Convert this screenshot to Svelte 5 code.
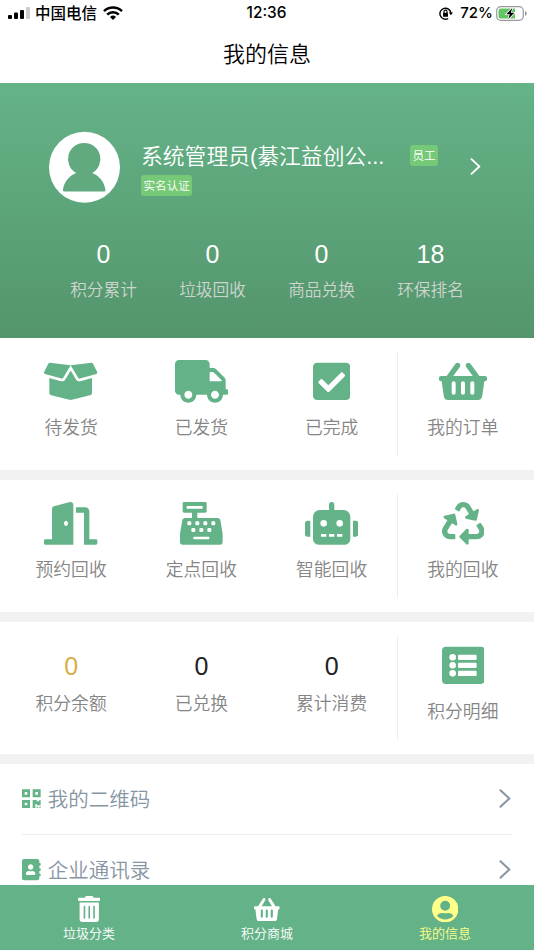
<script lang="ts">
  interface Icon {
    box: string;
    width: number;
    height: number;
    path: string;
  }

  interface Entry {
    label: string;
    icon: keyof typeof icons;
  }

  const basket =
    "M576 216v16c0 13.255-10.745 24-24 24h-8l-26.113 182.788C514.509 462.435 494.257 480 470.37 480H105.63c-23.887 0-44.139-17.565-47.518-41.212L32 256h-8c-13.255 0-24-10.745-24-24v-16c0-13.255 10.745-24 24-24h67.341l106.78-146.821c10.395-14.292 30.407-17.453 44.701-7.058 14.293 10.395 17.453 30.408 7.058 44.701L170.477 192h235.046L326.12 82.821c-10.395-14.292-7.234-34.306 7.059-44.701 14.291-10.395 34.306-7.235 44.701 7.058L484.659 192H552c13.255 0 24 10.745 24 24zM312 392V280c0-13.255-10.745-24-24-24s-24 10.745-24 24v112c0 13.255 10.745 24 24 24s24-10.745 24-24zm112 0V280c0-13.255-10.745-24-24-24s-24 10.745-24 24v112c0 13.255 10.745 24 24 24s24-10.745 24-24zm-224 0V280c0-13.255-10.745-24-24-24s-24 10.745-24 24v112c0 13.255 10.745 24 24 24s24-10.745 24-24z";

  const icons = {
    box: {
      box: "0 0 640 512", width: 53.33, height: 42.67,
      path: "M425.7 256c-16.9 0-32.8-9-41.4-23.4L320 126l-64.2 106.6c-8.7 14.5-24.6 23.5-41.5 23.5-4.5 0-9-.6-13.3-1.9L64 215v178c0 14.7 10 27.5 24.2 31l216.2 54.1c10.2 2.5 20.9 2.5 31 0L551.8 424c14.2-3.6 24.2-16.4 24.2-31V215l-137 39.1c-4.3 1.3-8.8 1.9-13.3 1.9zm212.6-112.2L586.8 41c-3.1-6.2-9.8-9.8-16.7-8.9L320 64l91.7 152.1c3.8 6.3 11.4 9.3 18.5 7.3l197.9-56.5c9.9-2.9 14.7-13.9 10.2-23.1zM53.2 41L1.7 143.8c-4.6 9.2.3 20.2 10.1 23l197.9 56.5c7.1 2 14.7-1 18.5-7.3L320 64 69.8 32.1c-6.9-.8-13.5 2.7-16.6 8.9z",
    },
    truck: {
      box: "0 0 640 512", width: 53.33, height: 42.67,
      path: "M624 352h-16V243.9c0-12.7-5.1-24.9-14.1-33.9L494 110.1c-9-9-21.2-14.1-33.9-14.1H416V48c0-26.5-21.5-48-48-48H48C21.5 0 0 21.5 0 48v320c0 26.5 21.5 48 48 48h16c0 53 43 96 96 96s96-43 96-96h128c0 53 43 96 96 96s96-43 96-96h48c8.8 0 16-7.2 16-16v-32c0-8.8-7.2-16-16-16zM160 464c-26.5 0-48-21.5-48-48s21.5-48 48-48 48 21.5 48 48-21.5 48-48 48zm320 0c-26.5 0-48-21.5-48-48s21.5-48 48-48 48 21.5 48 48-21.5 48-48 48zm80-208H416V144h44.1l99.9 99.9V256z",
    },
    check: {
      box: "0 0 448 512", width: 37.33, height: 42.67,
      path: "M400 480H48c-26.51 0-48-21.49-48-48V80c0-26.51 21.49-48 48-48h352c26.51 0 48 21.49 48 48v352c0 26.51-21.49 48-48 48zm-204.686-98.059l184-184c6.248-6.248 6.248-16.379 0-22.627l-22.627-22.627c-6.248-6.248-16.379-6.249-22.628 0L184 302.745l-70.059-70.059c-6.248-6.248-16.379-6.248-22.628 0l-22.627 22.627c-6.248 6.248-6.248 16.379 0 22.627l104 104c6.249 6.25 16.379 6.25 22.628.001z",
    },
    basket: { box: "0 0 576 512", width: 48, height: 42.67, path: basket },
    door: {
      box: "0 0 640 512", width: 53.33, height: 42.67,
      path: "M624 448h-80V113.45C544 86.19 522.47 64 496 64H384v64h96v384h144c8.84 0 16-7.16 16-16v-32c0-8.84-7.16-16-16-16zM312.24 1.01l-192 49.74C105.99 54.44 96 67.7 96 82.92V448H16c-8.84 0-16 7.16-16 16v32c0 8.84 7.16 16 16 16h336V33.18c0-21.58-19.56-37.41-39.76-32.17zM264 288c-13.25 0-24-14.33-24-32s10.75-32 24-32 24 14.33 24 32-10.75 32-24 32z",
    },
    register: {
      box: "0 0 512 512", width: 42.67, height: 42.67,
      path:
        "M511.1 378.8l-26.7-160c-2.6-15.4-15.9-26.7-31.6-26.7H208v-64h96c8.8 0 16-7.2 16-16V16c0-8.8-7.2-16-16-16H48c-8.8 0-16 7.2-16 16v96c0 8.8 7.2 16 16 16h96v64H59.1c-15.6 0-29 11.3-31.6 26.7L.8 378.7c-.6 3.5-.9 7-.9 10.5V480c0 17.7 14.3 32 32 32h448c17.7 0 32-14.3 32-32v-90.7c.1-3.5-.2-7-.8-10.5zM80 48h192v32H80zM168 416h176q8 0 8 8v16q0 8-8 8H168q-8 0-8-8v-16q0-8 8-8z" +
        [[112, 256], [208, 256], [304, 256], [400, 256], [160, 336], [256, 336], [352, 336]]
          .map(([x, y]) => `M${x - 8} ${y - 24}h16a16 16 0 0 1 16 16v16a16 16 0 0 1-16 16h-16a16 16 0 0 1-16-16v-16a16 16 0 0 1 16-16z`)
          .join(""),
    },
    robot: {
      box: "0 0 640 512", width: 53.33, height: 42.67,
      path: "M32 224H64V416H32A32 32 0 0 1 0 384V256A32 32 0 0 1 32 224Zm512-48V448a64 64 0 0 1-64 64H160a64 64 0 0 1-64-64V176a80 80 0 0 1 80-80H288V32a32 32 0 0 1 64 0V96H464A80 80 0 0 1 544 176ZM264 256a40 40 0 1 0-40 40A40 40 0 0 0 264 256Zm-8 128H192v32h64Zm96 0H288v32h64ZM456 256a40 40 0 1 0-40 40A40 40 0 0 0 456 256Zm-8 128H384v32h64ZM640 256V384a32 32 0 0 1-32 32H576V224h32A32 32 0 0 1 640 256Z",
    },
    recycle: {
      box: "0 0 512 512", width: 42.67, height: 42.67,
      path: "M184.561 261.903c3.232 13.997-12.123 24.635-24.068 17.168l-40.736-25.455-50.867 81.402C55.606 356.273 70.96 384 96.012 384H148c6.627 0 12 5.373 12 12v40c0 6.627-5.373 12-12 12H96.115c-75.334 0-121.302-83.048-81.408-146.88l50.822-81.388-40.725-25.448c-12.081-7.547-8.966-25.961 4.879-29.158l110.237-25.45c8.611-1.988 17.201 3.381 19.189 11.99l25.452 110.237zm98.561-182.915l41.289 66.076-40.74 25.457c-12.051 7.528-9 25.953 4.879 29.158l110.237 25.45c8.672 1.999 17.215-3.438 19.189-11.99l25.45-110.237c3.197-13.844-11.99-24.719-24.068-17.168l-40.687 25.424-41.263-66.082c-37.521-60.033-125.209-60.171-162.816 0l-17.963 28.766c-3.51 5.62-1.8 13.021 3.82 16.533l33.919 21.195c5.62 3.512 13.024 1.803 16.536-3.817l17.961-28.743c12.712-20.341 41.973-19.676 54.257-.022zM497.288 301.12l-27.515-44.065c-3.511-5.623-10.916-7.334-16.538-3.821l-33.861 21.159c-5.62 3.512-7.33 10.915-3.818 16.536l27.564 44.112c13.257 21.211-2.057 48.96-27.136 48.96H320V336.02c0-14.213-17.242-21.383-27.313-11.313l-80 79.981c-6.249 6.248-6.249 16.379 0 22.627l80 79.989C302.689 517.308 320 510.3 320 495.989V448h95.88c75.274 0 121.335-82.997 81.408-146.88z",
    },
    list: {
      box: "0 0 512 512", width: 42.67, height: 42.67,
      path: "M48 32h416a48 48 0 0 1 48 48v352a48 48 0 0 1-48 48H48a48 48 0 0 1-48-48V80a48 48 0 0 1 48-48zM128 120a40 40 0 1 0 0 80 40 40 0 1 0 0-80zM128 216a40 40 0 1 0 0 80 40 40 0 1 0 0-80zM128 312a40 40 0 1 0 0 80 40 40 0 1 0 0-80zM204 128h200q12 0 12 12v40q0 12-12 12H204q-12 0-12-12v-40q0-12 12-12zM204 224h200q12 0 12 12v40q0 12-12 12H204q-12 0-12-12v-40q0-12 12-12zM204 320h200q12 0 12 12v40q0 12-12 12H204q-12 0-12-12v-40q0-12 12-12z",
    },
    qrcode: {
      box: "0 0 448 512", width: 18.67, height: 21.33,
      path: "M0 224h192V32H0v192zM64 96h64v64H64V96zm192-64v192h192V32H256zm128 128h-64V96h64v64zM0 480h192V288H0v192zm64-128h64v64H64v-64zm352-64h32v128h-96v-32h-32v96h-64V288h96v32h64v-32zm0 160h32v32h-32v-32zm-64 0h32v32h-32v-32z",
    },
    contacts: {
      box: "0 0 448 512", width: 18.67, height: 21.33,
      path: "M436 160c6.6 0 12-5.4 12-12v-40c0-6.6-5.4-12-12-12h-20V48c0-26.5-21.5-48-48-48H48C21.5 0 0 21.5 0 48v416c0 26.5 21.5 48 48 48h320c26.5 0 48-21.5 48-48v-48h20c6.6 0 12-5.4 12-12v-40c0-6.6-5.4-12-12-12h-20v-64h20c6.6 0 12-5.4 12-12v-40c0-6.6-5.4-12-12-12h-20v-64h20zm-228-32c35.3 0 64 28.7 64 64s-28.7 64-64 64-64-28.7-64-64 28.7-64 64-64zm112 236.8c0 10.6-10 19.2-22.4 19.2H118.4C106 384 96 375.4 96 364.8v-19.2c0-31.8 30.1-57.6 67.2-57.6h5c12.3 5.1 25.7 8 39.8 8s27.6-2.9 39.8-8h5c37.1 0 67.2 25.8 67.2 57.6v19.2z",
    },
    trash: {
      box: "0 0 448 512", width: 22.5, height: 26,
      path: "M32 464a48 48 0 0 0 48 48h288a48 48 0 0 0 48-48V128H32zm272-256a16 16 0 0 1 32 0v224a16 16 0 0 1-32 0zm-96 0a16 16 0 0 1 32 0v224a16 16 0 0 1-32 0zm-96 0a16 16 0 0 1 32 0v224a16 16 0 0 1-32 0zM432 32H312l-9.4-18.7A24 24 0 0 0 281.1 0H166.8a23.7 23.7 0 0 0-21.4 13.3L136 32H16A16 16 0 0 0 0 48v32a16 16 0 0 0 16 16h416a16 16 0 0 0 16-16V48a16 16 0 0 0-16-16z",
    },
    shop: { box: "0 32 576 448", width: 25.6, height: 23, path: basket },
    user: {
      box: "0 0 26 26", width: 26.4, height: 26.4,
      path: "M13 0a13 13 0 1 0 0 26 13 13 0 1 0 0-26zM13 4.700a4.900 4.900 0 1 1 0 9.800 4.900 4.900 0 1 1 0-9.800zM5.300 19C6.500 17 8.700 16.400 10 16.700q3 .8 6 0c1.300-.3 3.500.3 4.700 2.300.3.5.2.9-.2 1.300-1.800 1.800-4.500 2.800-7.500 2.800s-5.700-1-7.500-2.800c-.4-.4-.5-.8-.2-1.300z",
    },
  } satisfies Record<string, Icon>;

  const stats = [
    { value: 0, label: "积分累计" },
    { value: 0, label: "垃圾回收" },
    { value: 0, label: "商品兑换" },
    { value: 18, label: "环保排名" },
  ];

  const groups: Entry[][] = [
    [
      { label: "待发货", icon: "box" },
      { label: "已发货", icon: "truck" },
      { label: "已完成", icon: "check" },
      { label: "我的订单", icon: "basket" },
    ],
    [
      { label: "预约回收", icon: "door" },
      { label: "定点回收", icon: "register" },
      { label: "智能回收", icon: "robot" },
      { label: "我的回收", icon: "recycle" },
    ],
  ];

  const points = [
    { value: 0, label: "积分余额" },
    { value: 0, label: "已兑换" },
    { value: 0, label: "累计消费" },
  ];

  const links: Entry[] = [
    { label: "我的二维码", icon: "qrcode" },
    { label: "企业通讯录", icon: "contacts" },
  ];

  const tabs: Entry[] = [
    { label: "垃圾分类", icon: "trash" },
    { label: "积分商城", icon: "shop" },
    { label: "我的信息", icon: "user" },
  ];

  let active = $state(2);
</script>

{#snippet glyph(name: keyof typeof icons)}
  {@const icon = icons[name]}
  <svg width={icon.width} height={icon.height} viewBox={icon.box} preserveAspectRatio="none" fill="currentColor" fill-rule="evenodd">
    <path d={icon.path} />
  </svg>
{/snippet}

{#snippet chevron(width: number, height: number)}
  <svg class="chevron" {width} {height} viewBox="0 0 11 18" fill="none" stroke="currentColor" stroke-width="2" stroke-linecap="round" stroke-linejoin="round">
    <path d="M1.200 1.200L9.600 9L1.200 16.800" />
  </svg>
{/snippet}

<div class="app">
  <div class="status">
    <div class="status__side">
      <svg width="22" height="12" viewBox="0 0 22 12">
        <rect x="0" y="8" width="4" height="4" rx="1" />
        <rect x="6" y="5.500" width="4" height="6.500" rx="1" />
        <rect x="12" y="3" width="4" height="9" rx="1" />
        <rect x="18" y="0" width="4" height="12" rx="1" fill="#ccc" />
      </svg>
      <span class="status__carrier">中国电信</span>
      <svg width="20" height="14" viewBox="0 0 20 14" fill="none" stroke="#000" stroke-width="2.600">
        <path d="M1 5.100a13 13 0 0 1 18 0M4.200 8.600a8.300 8.300 0 0 1 11.600 0" />
        <path d="M10 14l-3-3a4.300 4.300 0 0 1 6 0z" fill="#000" stroke="none" />
      </svg>
    </div>
    <span class="status__time">12:36</span>
    <div class="status__side status__side--right">
      <svg width="14" height="13" viewBox="0 0 14 13" fill="none" stroke="#000" stroke-width="1.400">
        <path d="M9.200 11.500A5.500 5.500 0 1 1 11.900 6" />
        <path d="M9.800 5.500h4.200l-2.100 2.800z" fill="#000" stroke="none" />
        <rect x="4" y="5.700" width="5" height="4" rx=".5" fill="#000" stroke="none" />
        <path d="M5 6V4.600a1.500 1.500 0 0 1 3 0V6" stroke-width="1.100" />
      </svg>
      <span class="status__battery">72%</span>
      <svg width="31" height="15" viewBox="0 0 31 15">
        <rect x=".7" y=".7" width="26.600" height="13.600" rx="4" fill="none" stroke="#999" stroke-width="1.200" />
        <path d="M29 5v5q1.800-.8 1.800-2.500T29 5z" fill="#999" />
        <path d="M5 2.500h14v10H5a2.500 2.500 0 0 1-2.500-2.500V5A2.500 2.500 0 0 1 5 2.500z" fill="#62c462" />
        <path d="M16.300 2L10.300 8.200h3.500L12.300 13l6-6.200h-3.500z" stroke="#fff" stroke-width="1.600" paint-order="stroke" />
      </svg>
    </div>
  </div>

  <h1 class="title">我的信息</h1>

  <section class="profile">
    <div class="profile__top">
      <svg class="profile__avatar" width="72" height="72" viewBox="0 0 72 72">
        <circle cx="36.500" cy="36.300" r="35.500" fill="#fff" />
        <path
          d="M36.200 12a16 16 0 0 1 8 30c7.500 2.800 12.300 9.500 13.300 17q.2 1.500-1.600 1.500H16.500q-1.800 0-1.600-1.500c1-7.500 5.800-14.200 13.300-17a16 16 0 0 1 8-30z"
          fill="#61aa80"
        />
      </svg>
      <div class="profile__info">
        <div class="profile__name">系统管理员(綦江益创公...</div>
        <span class="badge">实名认证</span>
      </div>
      <span class="badge badge--role">员工</span>
      {@render chevron(11, 17)}
    </div>
    <div class="profile__stats">
      {#each stats as stat}
        <div class="stat">
          <span class="stat__value">{stat.value}</span>
          <span class="stat__label">{stat.label}</span>
        </div>
      {/each}
    </div>
  </section>

  {#each groups as group}
    <section class="panel">
      {#each group as item}
        <div class="cell">
          {@render glyph(item.icon)}
          <span class="cell__label">{item.label}</span>
        </div>
      {/each}
    </section>
  {/each}

  <section class="panel">
    {#each points as point, i}
      <div class="cell cell--points">
        <span class="cell__value" class:cell__value--gold={i === 0}>{point.value}</span>
        <span class="cell__label">{point.label}</span>
      </div>
    {/each}
    <div class="cell">
      {@render glyph("list")}
      <span class="cell__label">积分明细</span>
    </div>
  </section>

  <div class="links">
    {#each links as link}
      <div class="link">
        <span class="link__icon">{@render glyph(link.icon)}</span>
        <span class="link__label">{link.label}</span>
        {@render chevron(12, 19)}
      </div>
    {/each}
  </div>

  <nav class="tabs">
    {#each tabs as tab, i}
      <button class="tab" class:tab--active={active === i} onclick={() => { active = i; }}>
        <span class="tab__icon">{@render glyph(tab.icon)}</span>
        <span>{tab.label}</span>
      </button>
    {/each}
  </nav>
</div>

<style>
  :global(body) {
    margin: 0;
  }

  .app {
    display: flex;
    flex-direction: column;
    width: 534px;
    height: 950px;
    overflow: hidden;
    background: #fff;
    font-family: "Liberation Sans", "Noto Sans CJK SC", sans-serif;
    font-weight: 350;
  }

  svg {
    display: block;
    flex: none;
  }

  .status {
    display: grid;
    grid-template-columns: 1fr auto 1fr;
    align-items: center;
    height: 26px;
    padding: 0 7px 0 8px;
    flex: none;
    font-family: Inter, "Noto Sans CJK SC", sans-serif;
    font-size: 15px;
    font-weight: 500;
    line-height: 26px;
  }

  .status__side {
    display: flex;
    align-items: center;
    gap: 6px;
  }

  .status__side--right {
    justify-content: flex-end;
    gap: 3px;
  }

  .status__carrier {
    margin-left: -1px;
    padding-top: 1px;
    font-size: 15.5px;
    line-height: 25px;
  }

  .status__time {
    padding-right: 2px;
    font-size: 15.4px;
  }

  .status__battery {
    margin-left: 4px;
  }

  .title {
    height: 57px;
    margin: 0;
    flex: none;
    font-size: 22px;
    font-weight: 350;
    line-height: 58px;
    text-align: center;
  }

  .profile {
    height: 255px;
    flex: none;
    box-sizing: border-box;
    padding: 48px 48px 0;
    color: #fff;
    background: linear-gradient(#65b388, #54956c);
  }

  .profile__top {
    display: flex;
    align-items: flex-start;
    height: 72px;
  }

  .profile__info {
    display: flex;
    flex-direction: column;
    align-items: flex-start;
    width: 247px;
    margin: 9px 22px 0 21px;
  }

  .profile__name {
    height: 32px;
    margin-bottom: 3px;
    font-size: 21.8px;
    line-height: 34px;
    white-space: nowrap;
  }

  .badge {
    height: 21px;
    padding: 0 2.5px;
    border-radius: 3px;
    background: #76c976;
    font-size: 11.6px;
    line-height: 21px;
    white-space: nowrap;
  }

  .badge--role {
    width: 23px;
    margin-top: 14px;
    text-align: center;
  }

  .profile__top .chevron {
    margin: 27px 5px 0 auto;
  }

  .profile__stats {
    display: flex;
    margin: 35px 0 0 1px;
  }

  .stat {
    display: flex;
    flex-direction: column;
    align-items: center;
    width: 109px;
  }

  .stat__value {
    height: 36px;
    font-size: 25px;
    line-height: 32px;
  }

  .stat__label {
    color: #cdd5cf;
    font-size: 16.7px;
    line-height: 34px;
  }

  .panel {
    display: flex;
    height: 132px;
    flex: none;
    box-sizing: border-box;
    margin-bottom: 10px;
    padding: 14px 6px;
    box-shadow: 0 10px #f2f2f2;
  }

  .cell {
    display: flex;
    flex-direction: column;
    align-items: center;
    flex: 1;
    box-sizing: border-box;
    padding-top: 8px;
    color: #64b287;
  }

  .cell:last-child {
    border-left: 1px solid #eee;
  }

  .cell__label {
    margin-top: 9px;
    color: #858585;
    font-size: 17.8px;
    line-height: 33px;
  }

  .cell__value {
    height: 35px;
    color: #222;
    font-size: 25px;
    line-height: 44px;
  }

  .cell__value--gold {
    color: #d6ae4a;
  }

  .links {
    flex: 1;
    min-height: 0;
    padding: 0 22px;
    overflow: hidden;
  }

  .link {
    display: flex;
    align-items: center;
    height: 70px;
    border-bottom: 1px solid #ececec;
    color: #8796a3;
  }

  .link__icon {
    color: #64b287;
  }

  .link__label {
    margin-left: 7px;
    padding-top: 2px;
    font-size: 20.5px;
    line-height: 30px;
  }

  .link .chevron {
    margin: 0 1px 1px auto;
  }

  .tabs {
    display: flex;
    height: 65px;
    flex: none;
    background: #64b287;
  }

  .tab {
    display: flex;
    flex: 1;
    flex-direction: column;
    align-items: center;
    padding: 10px 0 0;
    border: 0;
    background: none;
    color: #fff;
    font: inherit;
    font-size: 13px;
    line-height: 22px;
  }

  .tab__icon {
    display: flex;
    align-items: center;
    height: 28px;
  }

  .tab--active {
    color: #ffff8c;
  }
</style>
